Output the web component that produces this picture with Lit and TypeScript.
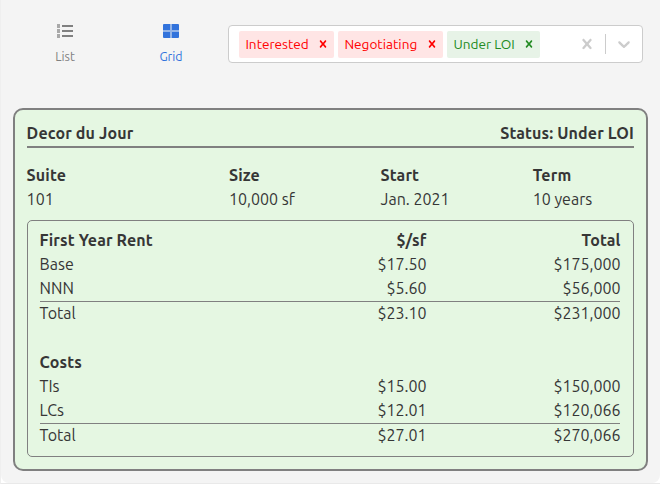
import { LitElement, html, css, svg } from "lit";
import { customElement, property } from "lit/decorators.js";

const FONT = css`Ubuntu, "Noto Sans", "Open Sans", sans-serif`;

const CLEAR =
  "M14.348 14.849c-0.469 0.469-1.229 0.469-1.697 0l-2.651-3.030-2.651 3.029c-0.469 0.469-1.229 0.469-1.697 0-0.469-0.469-0.469-1.229 0-1.697l2.758-3.15-2.759-3.152c-0.469-0.469-0.469-1.228 0-1.697s1.228-0.469 1.697 0l2.652 3.031 2.651-3.031c0.469-0.469 1.228-0.469 1.697 0s0.469 1.229 0 1.697l-2.758 3.152 2.758 3.15c0.469 0.469 0.469 1.229 0 1.698z";
const CHEVRON =
  "M4.516 7.548c0.436-0.446 1.043-0.481 1.576 0l3.908 3.747 3.908-3.747c0.533-0.481 1.141-0.446 1.574 0 0.436 0.445 0.408 1.197 0 1.615-0.406 0.418-4.695 4.502-4.695 4.502-0.217 0.223-0.502 0.335-0.787 0.335s-0.57-0.112-0.789-0.335c0 0-4.287-4.084-4.695-4.502s-0.436-1.17 0-1.615z";

const cross = (size: number) => svg`<svg class="ico" width=${size} height=${size} viewBox="0 0 20 20"><path d=${CLEAR} /></svg>`;

@customElement("status-tag")
export class StatusTag extends LitElement {
  @property() label = "";
  @property({ reflect: true }) tone = "red";

  static styles = css`
    :host { display: flex; height: 27px; border-radius: 2px; color: #f00; background: #ffe5e5; }
    :host([tone="green"]) { color: #228b22; background: #e7f3e7; }
    .label { padding-left: 6.4px; font: 13.6px/27px ${FONT}; white-space: nowrap; }
    .remove { display: flex; align-items: center; padding: 0 4px; margin-left: auto; }
    .ico { fill: currentColor; }
  `;

  render() {
    return html`<span class="label">${this.label}</span><span class="remove">${cross(14)}</span>`;
  }
}

@customElement("status-select")
export class StatusSelect extends LitElement {
  static styles = css`
    :host { display: flex; box-sizing: border-box; width: 415px; height: 38px; border: 1px solid #ccc; border-radius: 4px; background: #fff; color: #ccc; }
    .tags { display: flex; flex: 1; align-items: center; gap: 4px; padding-left: 10px; }
    .tag-a { width: 95px; }
    .tag-b { width: 105px; }
    .tag-c { width: 93px; }
    .controls { display: flex; }
    .button { display: flex; padding: 8px; }
    .line { width: 1px; margin: 8px 0; background: #ccc; }
    .ico { fill: currentColor; }
  `;

  render() {
    return html`
      <div class="tags">
        <status-tag class="tag-a" label="Interested"></status-tag>
        <status-tag class="tag-b" label="Negotiating"></status-tag>
        <status-tag class="tag-c" label="Under LOI" tone="green"></status-tag>
      </div>
      <div class="controls">
        <span class="button">${cross(20)}</span>
        <span class="line"></span>
        <span class="button"><svg class="ico" width="20" height="20" viewBox="0 0 20 20"><path d=${CHEVRON} /></svg></span>
      </div>
    `;
  }
}

interface Group { title: string; heads: string[]; rows: string[][]; }

const FACTS = [["Suite", "101"], ["Size", "10,000 sf"], ["Start", "Jan. 2021"], ["Term", "10 years"]];
const GROUPS: Group[] = [
  { title: "First Year Rent", heads: ["$/sf", "Total"], rows: [["Base", "$17.50", "$175,000"], ["NNN", "$5.60", "$56,000"], ["Total", "$23.10", "$231,000"]] },
  { title: "Costs", heads: ["", ""], rows: [["TIs", "$15.00", "$150,000"], ["LCs", "$12.01", "$120,066"], ["Total", "$27.01", "$270,066"]] },
];

@customElement("deal-card")
export class DealCard extends LitElement {
  static styles = css`
    :host { display: block; box-sizing: border-box; height: 363px; padding: 11px 12px; border: 2px solid #808080; border-radius: 10px; background: #e5f7e2; color: #363636; font: 16px/24px ${FONT}; }
    .head { display: flex; justify-content: space-between; height: 25px; border-bottom: 2px solid #808080; }
    .strong, .head { font-weight: 700; letter-spacing: 0.13px; }
    .head, .facts { text-indent: -0.4px; }
    .facts { display: grid; grid-template-columns: 202.4px 151.6px 152.1px 1fr; margin-top: 15px; }
    .money { box-sizing: border-box; height: 237px; margin-top: 9px; padding: 7px 13px 0 12px; border: 1px solid #808080; border-radius: 5px; }
    .group + .group { margin-top: 25px; }
    .row { display: grid; grid-template-columns: 1fr 193px 194px; height: 24px; text-indent: -0.4px; }
    .num { text-align: right; text-indent: 0; margin-right: -0.5px; }
    .sum { box-sizing: border-box; margin-top: 1px; border-top: 1px solid #808080; line-height: 22px; }
  `;

  render() {
    return html`
      <div class="head"><span>Decor du Jour</span><span>Status: Under LOI</span></div>
      <div class="facts">${FACTS.map(([k, v]) => html`<div><div class="strong">${k}</div><div>${v}</div></div>`)}</div>
      <div class="money">
        ${GROUPS.map((g) => html`<div class="group">
          <div class="row strong"><span>${g.title}</span>${g.heads.map((h) => html`<span class="num">${h}</span>`)}</div>
          ${g.rows.map(([name, rate, total]) => html`<div class="row ${name === "Total" ? "sum" : ""}"><span>${name}</span><span class="num">${rate}</span><span class="num">${total}</span></div>`)}
        </div>`)}
      </div>
    `;
  }
}

@customElement("app-root")
export class AppRoot extends LitElement {
  static styles = css`
    :host { display: block; box-sizing: border-box; height: 484px; overflow: hidden; border-left: 1px solid #efefef; border-bottom: 1px solid #e9e9e9; background: #fff; }
    .panel { box-sizing: border-box; height: 483px; padding: 25px 12px 0 12px; border-radius: 0 0 8px 8px; background: #f4f4f4; }
    .bar { display: flex; height: 38px; margin-bottom: 45px; }
    .tab { display: flex; flex-direction: column; align-items: center; width: 106px; color: #808080; font: 12.4px/18px ${FONT}; }
    .active { color: #3273dc; }
    .tab svg { display: block; flex-shrink: 0; margin: -4px 0 6px; fill: currentColor; }
    .tabs { display: flex; width: 216px; margin-left: -1px; }
  `;

  render() {
    return html`
      <div class="panel">
        <div class="bar">
          <div class="tabs">
            <div class="tab"><svg width="20" height="20" viewBox="0 0 20 20"><g opacity="0.65"><path d="M2 3h3v4H2zM2 8h3v4H2zM2 13h3v4H2z" /></g><path d="M7 4h11v2H7zM7 9h11v2H7zM7 14h11v2H7z" /></svg><span>List</span></div>
            <div class="tab active"><svg width="20" height="20" viewBox="0 0 20 20"><path d="M3 3h6v6H2V4a1 1 0 0 1 1-1zM11 3h6a1 1 0 0 1 1 1v5h-7zM2 11h7v6H3a1 1 0 0 1-1-1zM11 11h7v5a1 1 0 0 1-1 1h-6z" /><path opacity="0.5" d="M9 3h2v14H9zM2 9h7v2H2zM11 9h7v2h-7z" /></svg><span>Grid</span></div>
          </div>
          <status-select></status-select>
        </div>
        <deal-card></deal-card>
      </div>
    `;
  }
}
